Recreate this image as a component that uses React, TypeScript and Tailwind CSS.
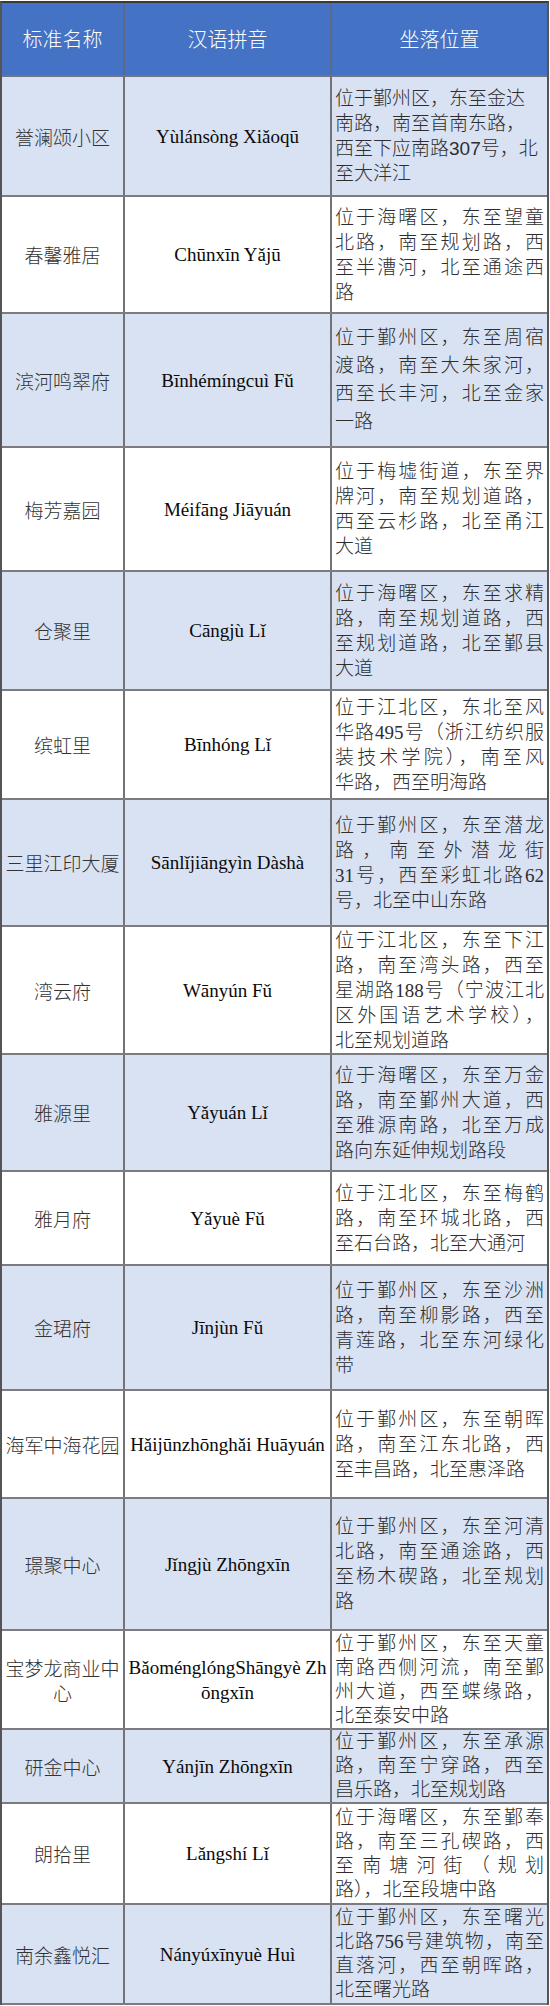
import React from "react"

type Row = {
  name: string[]
  py: string[]
  addr: React.ReactNode[]
  h: string
  lh?: string
  plain?: boolean
}

const rows: Row[] = [
  {
    name: ["誉澜颂小区"],
    py: ["Yùlánsòng Xiǎoqū"],
    h: "h-[120px]",
    plain: true,
    addr: [
      "位于鄞州区，东至金达",
      "南路，南至首南东路，",
      <>
        西至下应南路<span className="font-['Liberation_Sans',sans-serif]">307</span>号，北
      </>,
      "至大洋江",
    ],
  },
  {
    name: ["春馨雅居"],
    py: ["Chūnxīn Yǎjū"],
    h: "h-[117px]",
    addr: ["位于海曙区，东至望童", "北路，南至规划路，西", "至半漕河，北至通途西", "路"],
  },
  {
    name: ["滨河鸣翠府"],
    py: ["Bīnhémíngcuì Fǔ"],
    h: "h-[134px]",
    lh: "leading-[28px]",
    addr: ["位于鄞州区，东至周宿", "渡路，南至大朱家河，", "西至长丰河，北至金家", "一路"],
  },
  {
    name: ["梅芳嘉园"],
    py: ["Méifāng Jiāyuán"],
    h: "h-[124px]",
    addr: ["位于梅墟街道，东至界", "牌河，南至规划道路，", "西至云杉路，北至甬江", "大道"],
  },
  {
    name: ["仓聚里"],
    py: ["Cāngjù Lǐ"],
    h: "h-[119px]",
    addr: ["位于海曙区，东至求精", "路，南至规划道路，西", "至规划道路，北至鄞县", "大道"],
  },
  {
    name: ["缤虹里"],
    py: ["Bīnhóng Lǐ"],
    h: "h-[109px]",
    addr: ["位于江北区，东北至风", "华路495号（浙江纺织服", "装技术学院），南至风", "华路，西至明海路"],
  },
  {
    name: ["三里江印大厦"],
    py: ["Sānlǐjiāngyìn Dàshà"],
    h: "h-[127px]",
    addr: ["位于鄞州区，东至潜龙", "路，南至外潜龙街", "31号，西至彩虹北路62", "号，北至中山东路"],
  },
  {
    name: ["湾云府"],
    py: ["Wānyún Fǔ"],
    h: "h-[128px]",
    addr: [
      "位于江北区，东至下江",
      "路，南至湾头路，西至",
      "星湖路188号（宁波江北",
      "区外国语艺术学校），",
      "北至规划道路",
    ],
  },
  {
    name: ["雅源里"],
    py: ["Yǎyuán Lǐ"],
    h: "h-[117px]",
    addr: ["位于海曙区，东至万金", "路，南至鄞州大道，西", "至雅源南路，北至万成", "路向东延伸规划路段"],
  },
  {
    name: ["雅月府"],
    py: ["Yǎyuè Fǔ"],
    h: "h-[94px]",
    addr: ["位于江北区，东至梅鹤", "路，南至环城北路，西", "至石台路，北至大通河"],
  },
  {
    name: ["金珺府"],
    py: ["Jīnjùn Fǔ"],
    h: "h-[125px]",
    addr: ["位于鄞州区，东至沙洲", "路，南至柳影路，西至", "青莲路，北至东河绿化", "带"],
  },
  {
    name: ["海军中海花园"],
    py: ["Hǎijūnzhōnghǎi Huāyuán"],
    h: "h-[108px]",
    addr: ["位于鄞州区，东至朝晖", "路，南至江东北路，西", "至丰昌路，北至惠泽路"],
  },
  {
    name: ["璟聚中心"],
    py: ["Jǐngjù Zhōngxīn"],
    h: "h-[132px]",
    addr: ["位于鄞州区，东至河清", "北路，南至通途路，西", "至杨木碶路，北至规划", "路"],
  },
  {
    name: ["宝梦龙商业中", "心"],
    py: ["BǎoménglóngShāngyè Zh", "ōngxīn"],
    h: "h-[99px]",
    lh: "leading-[24px]",
    addr: ["位于鄞州区，东至天童", "南路西侧河流，南至鄞", "州大道，西至蝶缘路，", "北至泰安中路"],
  },
  {
    name: ["研金中心"],
    py: ["Yánjīn Zhōngxīn"],
    h: "h-[74px]",
    lh: "leading-[24px]",
    addr: ["位于鄞州区，东至承源", "路，南至宁穿路，西至", "昌乐路，北至规划路"],
  },
  {
    name: ["朗拾里"],
    py: ["Lǎngshí Lǐ"],
    h: "h-[101px]",
    lh: "leading-[24px]",
    addr: ["位于海曙区，东至鄞奉", "路，南至三孔碶路，西", "至南塘河街（规划", "路），北至段塘中路"],
  },
  {
    name: ["南余鑫悦汇"],
    py: ["Nányúxīnyuè Huì"],
    h: "h-[100px]",
    lh: "leading-[24px]",
    addr: ["位于鄞州区，东至曙光", "北路756号建筑物，南至", "直落河，西至朝晖路，", "北至曙光路"],
  },
]

const App: React.FC = () => {
  return (
    <div className="bg-white min-h-[2006px]">
      <div className="mt-[1px] w-[549px] border-t-2 border-x-2 border-t-[#3a3a3a] border-x-[#555]">
        {/* header */}
        <div className="grid grid-cols-[123px_207px_215px] h-[74px] bg-[#4472c4] border-b-2 border-[#6f7480] text-white text-[20px] font-light font-['Noto_Sans_CJK_SC',sans-serif]">
          <div className="flex items-center justify-center border-r-2 border-[#5d6a86]">标准名称</div>
          <div className="flex items-center justify-center border-r-2 border-[#5d6a86]">汉语拼音</div>
          <div className="flex items-center justify-center">坐落位置</div>
        </div>

        {rows.map((r, i) => (
          <div
            key={i}
            className={`grid grid-cols-[123px_207px_215px] border-b-2 border-[#7c7c80] ${r.h} ${
              i % 2 === 0 ? "bg-[#d9e2f3]" : "bg-white"
            }`}
          >
            <div className="flex flex-col items-center justify-center border-r-2 border-[#727278] text-[19px] leading-[25px] font-light text-[#333] font-['Noto_Sans_CJK_SC',sans-serif]">
              {r.name.map((n, j) => (
                <div key={j} className="whitespace-nowrap">
                  {n}
                </div>
              ))}
            </div>
            <div className="flex flex-col items-center justify-center border-r-2 border-[#727278] text-[19px] leading-[25px] text-[#0a0a0a] font-['Liberation_Serif',serif]">
              {r.py.map((p, j) => (
                <div key={j} className="whitespace-nowrap">
                  {p}
                </div>
              ))}
            </div>
            <div
              className={`flex flex-col justify-center pl-[3px] pr-[3px] text-[19px] font-light text-[#2e2e2e] font-['Liberation_Serif','Noto_Sans_CJK_SC',serif] ${
                r.lh ?? "leading-[25px]"
              }`}
            >
              {r.addr.map((a, j) => (
                <div
                  key={j}
                  className={`whitespace-nowrap ${
                    !r.plain && j < r.addr.length - 1 ? "text-justify [text-align-last:justify]" : "text-left"
                  }`}
                >
                  {a}
                </div>
              ))}
            </div>
          </div>
        ))}
      </div>
    </div>
  )
}

export default App
